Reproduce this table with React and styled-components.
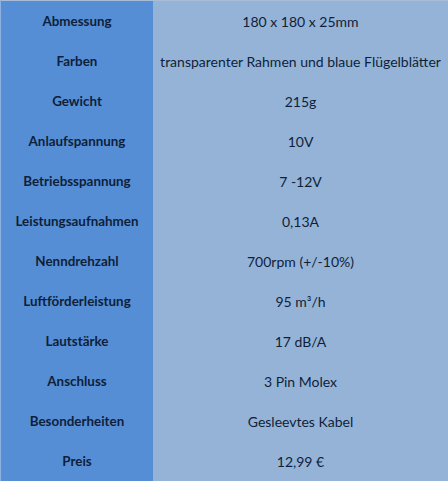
import React from 'react';
import styled, { createGlobalStyle } from 'styled-components';

const Global = createGlobalStyle`
    body {
        margin: 0;
        background: #95b3d7;
    }
`;

const Table = styled.div`
    width: 448px;
    display: grid;
    grid-template-columns: 152px 1fr;
    grid-auto-rows: 40px;
    font-family: Lato, "Open Sans", sans-serif;
    font-size: 14px;
    color: #0f1f3a;
    background: linear-gradient(to right, #558ed5 152px, #95b3d7 152px);
    border-left: 1px solid #8db0de;
    border-top: 1px solid #a8bcd8;
    box-sizing: border-box;
`;

const Cell = styled.div`
    display: flex;
    align-items: center;
    justify-content: center;
    font-size: ${(p) => (p.$head ? '13.4px' : '14px')};
    font-weight: ${(p) => (p.$head ? 700 : 400)};
    white-space: nowrap;
`;

const rows = [
    ['Abmessung', '180 x 180 x 25mm'],
    ['Farben', 'transparenter Rahmen und blaue Flügelblätter'],
    ['Gewicht', '215g'],
    ['Anlaufspannung', '10V'],
    ['Betriebsspannung', '7 -12V'],
    ['Leistungsaufnahmen', '0,13A'],
    ['Nenndrehzahl', '700rpm (+/-10%)'],
    ['Luftförderleistung', '95 m³/h'],
    ['Lautstärke', '17 dB/A'],
    ['Anschluss', '3 Pin Molex'],
    ['Besonderheiten', 'Gesleevtes Kabel'],
    ['Preis', '12,99 €'],
];

const App = () => {
    return (
        <>
            <Global />
            <Table>
                {rows.map(([k, v]) => (
                    <React.Fragment key={k}>
                        <Cell $head>{k}</Cell>
                        <Cell>{v}</Cell>
                    </React.Fragment>
                ))}
            </Table>
        </>
    );
};

export default App;
